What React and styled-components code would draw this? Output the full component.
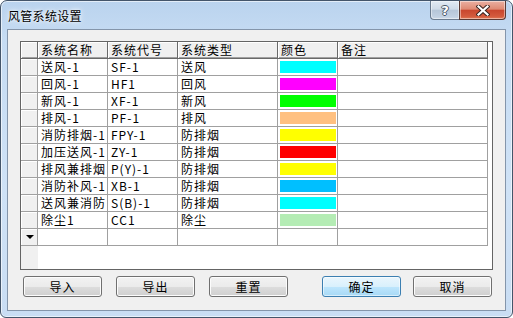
import React from "react";
import styled, { createGlobalStyle } from "styled-components";

const GlobalStyle = createGlobalStyle`
  html, body { margin: 0; padding: 0; background: #ffffff; }
  body { font-family: "Noto Sans CJK SC", "Noto Sans", sans-serif; }
  * { box-sizing: border-box; }
`;

const Window = styled.div`
  width: 513px;
  height: 318px;
  border: 1px solid #44556a;
  border-radius: 7px 7px 6px 6px;
  background: linear-gradient(180deg, #bad3ee 0%, #c6dcf3 12%, #cfe2f6 60%, #c9ddf3 100%);
  box-shadow: inset 0 0 0 1px rgba(255, 255, 255, 0.6);
  display: flex;
  flex-direction: column;
  overflow: hidden;
`;

const TitleBar = styled.div`
  height: 28px;
  display: flex;
  align-items: flex-start;
  padding: 0 6px 0 7px;
`;

const Title = styled.div`
  flex: 1;
  font-size: 12px;
  line-height: 29px;
  color: #000;
  letter-spacing: 0.3px;
  text-shadow: 0 0 6px rgba(255, 255, 255, 0.95), 0 0 3px rgba(255, 255, 255, 0.9);
`;

const CaptionGroup = styled.div`
  display: flex;
  height: 19px;
`;

const CaptionButton = styled.div`
  height: 19px;
  width: ${(p) => p.$w}px;
  display: flex;
  align-items: center;
  justify-content: center;
  border: 1px solid ${(p) => (p.$close ? "#5a3a34" : "#6a7b8f")};
  border-top: none;
  ${(p) => (p.$close ? "" : "border-right: none;")}
  border-radius: ${(p) => (p.$close ? "0 0 4px 0" : "0 0 0 4px")};
  background: ${(p) =>
    p.$close
      ? "linear-gradient(180deg, #eab0a2 0%, #df8a74 45%, #c9472e 52%, #d35a3d 85%, #e07a55 100%)"
      : "linear-gradient(180deg, #e2eaf3 0%, #cfdbe8 45%, #b6c6d8 52%, #c1d0e1 85%, #cddae8 100%)"};
  box-shadow: inset 0 0 0 1px rgba(255, 255, 255, 0.45);
`;

const HelpGlyph = styled.span`
  font-family: "DejaVu Sans", sans-serif;
  font-weight: bold;
  font-size: 13px;
  line-height: 13px;
  color: #fff;
  text-shadow: 1px 0 0 #4a5868, -1px 0 0 #4a5868, 0 1px 0 #4a5868, 0 -1px 0 #4a5868;
`;

const Client = styled.div`
  flex: 1;
  margin: 0 6px 6px 6px;
  border: 1px solid #8495aa;
  background: #f0f0f0;
  display: flex;
  flex-direction: column;
  padding: 11px 12px 0 12px;
`;

const Grid = styled.div`
  height: 229px;
  border: 1px solid #646464;
  background: linear-gradient(90deg, #f0f0f0 0 17px, #ffffff 17px);
  overflow: hidden;
`;

const Row = styled.div`
  display: flex;
  height: 17px;
`;

const Cell = styled.div`
  flex: none;
  width: ${(p) => p.$w}px;
  height: 17px;
  padding-left: 3px;
  border-right: 1px solid #a0a0a0;
  border-bottom: 1px solid #a0a0a0;
  background: #ffffff;
  font-size: 12px;
  line-height: 16px;
  letter-spacing: 1px;
  color: #000;
  white-space: nowrap;
  overflow: hidden;
`;

const HeadCell = styled(Cell)`
  background: #f0f0f0;
  border-right-color: #696969;
  border-bottom-color: #696969;
  box-shadow: inset 1px 1px 0 #ffffff, inset 0 -1px 0 #a0a0a0;
`;

const RowHead = styled(Cell)`
  padding: 0;
  background: #f0f0f0;
  box-shadow: inset 1px 1px 0 #ffffff;
  display: flex;
  align-items: center;
  justify-content: center;
`;

const NewRowMark = styled.span`
  width: 0;
  height: 0;
  border-left: 4px solid transparent;
  border-right: 4px solid transparent;
  border-top: 4px solid #000;
  margin-left: 1px;
`;

const SwatchCell = styled(Cell)`
  padding: 2px 1px 2px 2px;
`;

const Swatch = styled.div`
  height: 12px;
  background: ${(p) => p.$c};
`;

const ButtonRow = styled.div`
  display: flex;
  justify-content: space-between;
  margin-top: 6px;
  padding: 0 1px 0 3px;
`;

const ButtonGroup = styled.div`
  display: flex;
  gap: ${(p) => p.$gap}px;
`;

const Button = styled.div`
  width: 79px;
  height: 21px;
  border: 1px solid ${(p) => (p.$default ? "#3c7fb1" : "#707070")};
  border-radius: 3px;
  background: ${(p) =>
    p.$default
      ? "linear-gradient(180deg, #eaf6fd 0%, #d9f0fc 50%, #bee6fd 50%, #a7d9f5 100%)"
      : "linear-gradient(180deg, #f2f2f2 0%, #ebebeb 50%, #dddddd 50%, #cfcfcf 100%)"};
  box-shadow: inset 0 0 0 1px ${(p) => (p.$default ? "rgba(255,255,255,0.55)" : "#fcfcfc")};
  display: flex;
  align-items: center;
  justify-content: center;
  font-size: 12px;
  letter-spacing: 1px;
  color: #000;
  line-height: 19px;
`;

const cols = [70, 70, 100, 60, 150];
const headers = ["系统名称", "系统代号", "系统类型", "颜色", "备注"];

const rows = [
  ["送风-1", "SF-1", "送风", "#00ffff"],
  ["回风-1", "HF1", "回风", "#ff00ff"],
  ["新风-1", "XF-1", "新风", "#00ff00"],
  ["排风-1", "PF-1", "排风", "#ffc080"],
  ["消防排烟-1", "FPY-1", "防排烟", "#ffff00"],
  ["加压送风-1", "ZY-1", "防排烟", "#ff0000"],
  ["排风兼排烟", "P(Y)-1", "防排烟", "#ffff00"],
  ["消防补风-1", "XB-1", "防排烟", "#00bfff"],
  ["送风兼消防", "S(B)-1", "防排烟", "#00ffff"],
  ["除尘1", "CC1", "除尘", "#b4ecb4"],
];

export default function App() {
  return (
    <>
      <GlobalStyle />
      <Window>
        <TitleBar>
          <Title>风管系统设置</Title>
          <CaptionGroup>
            <CaptionButton $w={29}>
              <HelpGlyph>?</HelpGlyph>
            </CaptionButton>
            <CaptionButton $w={47} $close>
              <svg width="14" height="11" viewBox="0 0 14 11">
                <path d="M2.5 1.5 L11.5 9.5 M11.5 1.5 L2.5 9.5" stroke="#3a2622" strokeWidth="4.2" strokeLinecap="square" fill="none" />
                <path d="M2.5 1.5 L11.5 9.5 M11.5 1.5 L2.5 9.5" stroke="#ffffff" strokeWidth="2.2" strokeLinecap="square" fill="none" />
              </svg>
            </CaptionButton>
          </CaptionGroup>
        </TitleBar>
        <Client>
          <Grid>
            <Row>
              <HeadCell $w={17} />
              {headers.map((h, i) => (
                <HeadCell key={h} $w={cols[i]}>{h}</HeadCell>
              ))}
            </Row>
            {rows.map((r, idx) => (
              <Row key={idx}>
                <RowHead $w={17} />
                <Cell $w={cols[0]}>{r[0]}</Cell>
                <Cell $w={cols[1]}>{r[1]}</Cell>
                <Cell $w={cols[2]}>{r[2]}</Cell>
                <SwatchCell $w={cols[3]}>
                  <Swatch $c={r[3]} />
                </SwatchCell>
                <Cell $w={cols[4]} />
              </Row>
            ))}
            <Row>
              <RowHead $w={17}>
                <NewRowMark />
              </RowHead>
              <Cell $w={cols[0]} />
              <Cell $w={cols[1]} />
              <Cell $w={cols[2]} />
              <Cell $w={cols[3]} />
              <Cell $w={cols[4]} />
            </Row>
          </Grid>
          <ButtonRow>
            <ButtonGroup $gap={14}>
              <Button>导入</Button>
              <Button>导出</Button>
              <Button>重置</Button>
            </ButtonGroup>
            <ButtonGroup $gap={12}>
              <Button $default>确定</Button>
              <Button>取消</Button>
            </ButtonGroup>
          </ButtonRow>
        </Client>
      </Window>
    </>
  );
}
